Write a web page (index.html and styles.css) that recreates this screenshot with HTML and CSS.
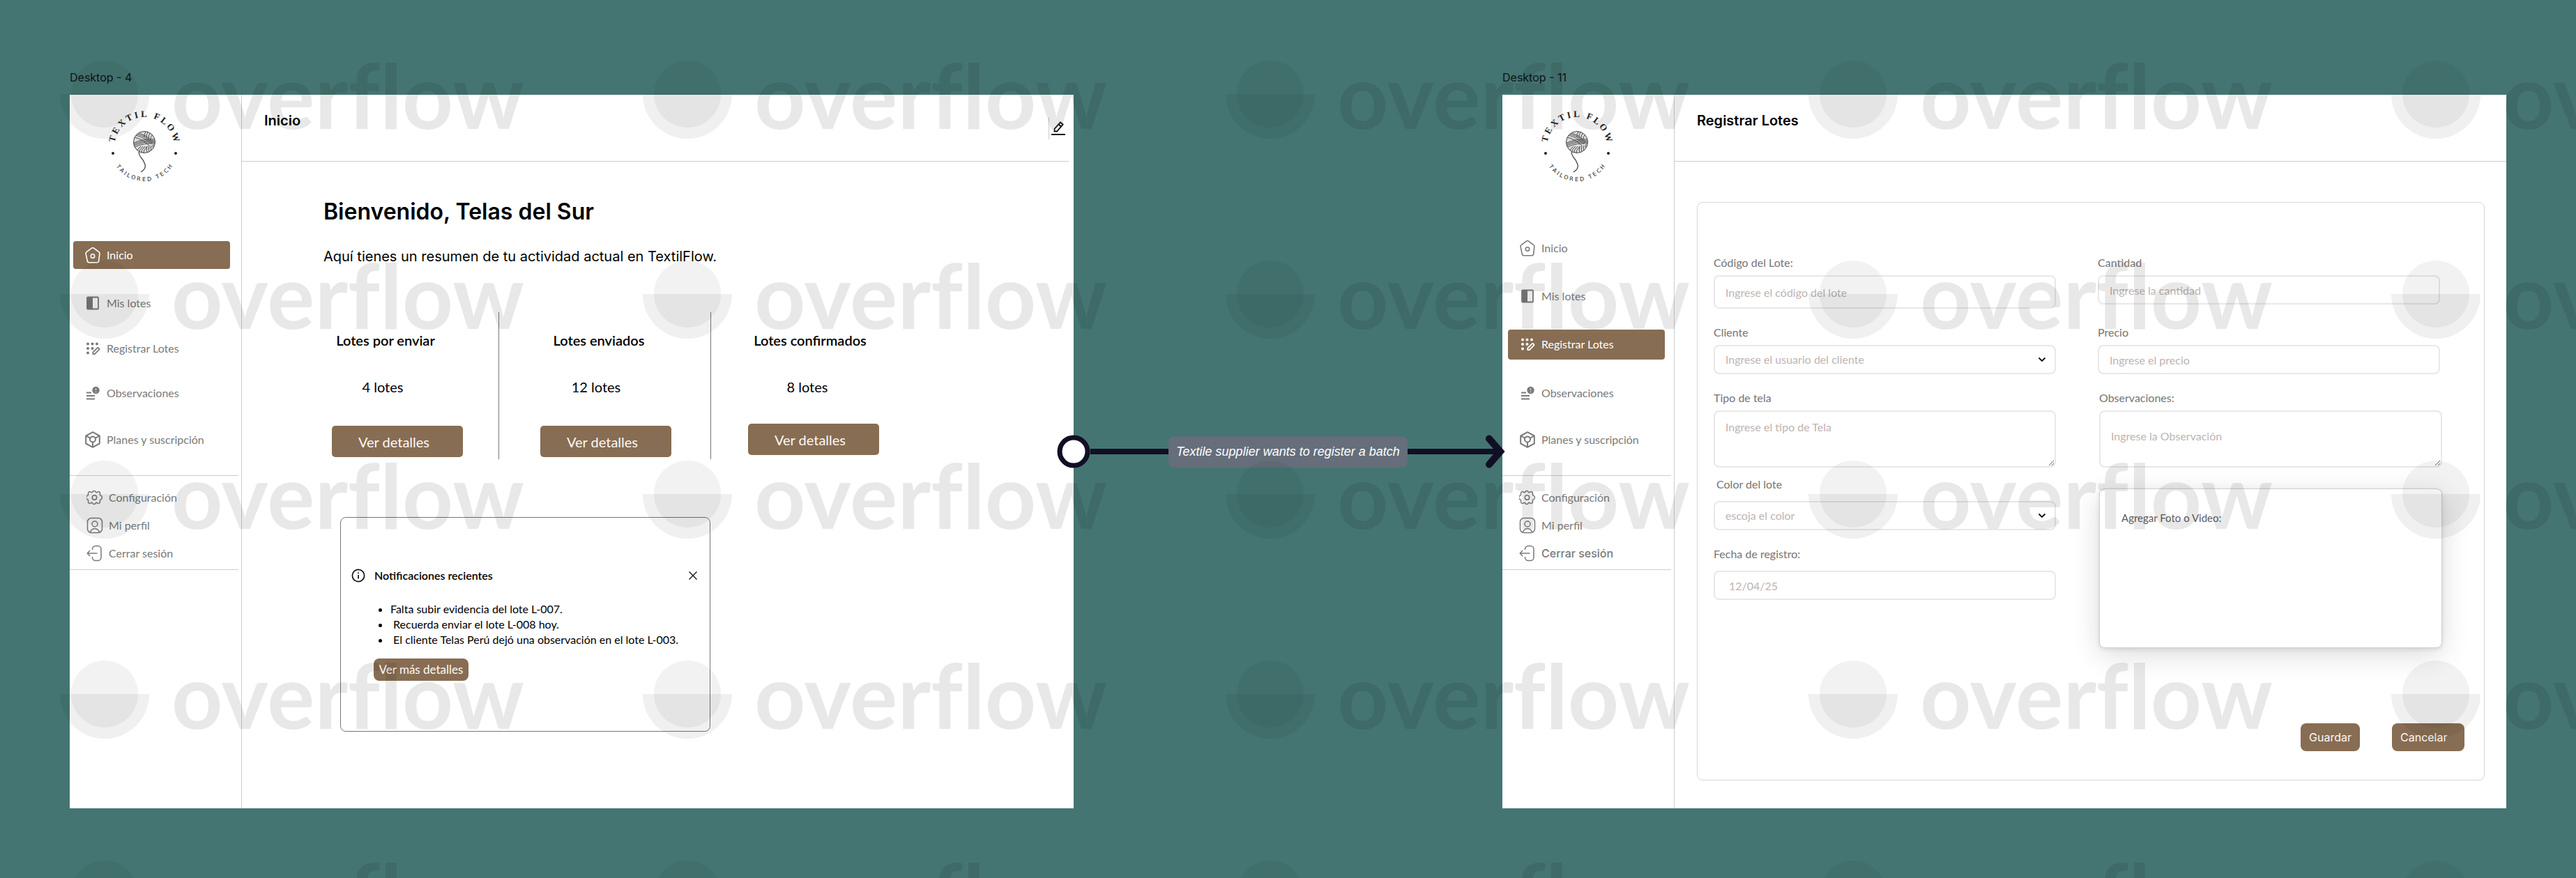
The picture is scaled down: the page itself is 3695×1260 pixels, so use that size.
FILE: index.html
```html
<!DOCTYPE html>
<html lang="es">
<head>
<meta charset="utf-8">
<meta name="viewport" content="width=device-width, initial-scale=1">
<title>TextilFlow</title>
<link rel="stylesheet" href="styles.css">
</head>
<body>
<svg class="sprite" aria-hidden="true">
  <symbol id="i-home" viewBox="0 0 24 24"><path d="M10.4 2.1a2.6 2.6 0 0 1 3.2 0l7.3 5.6a2.6 2.6 0 0 1 1 2.4l-1.2 10.3a2.6 2.6 0 0 1-2.6 2.3H6.9a2.6 2.6 0 0 1-2.6-2.3L2.100 10.100a2.600 2.600 0 0 1 1-2.400z" fill="none" stroke="currentColor" stroke-width="1.600"/><circle cx="12" cy="13.500" r="2.700" fill="none" stroke="currentColor" stroke-width="1.600"/></symbol>
  <symbol id="i-lots" viewBox="0 0 24 24"><rect x="4" y="3.500" width="16" height="17" rx="1" fill="none" stroke="currentColor" stroke-width="1.800"/><path d="M4 3.500h8v17H4z" fill="currentColor"/></symbol>
  <symbol id="i-register" viewBox="0 0 24 24"><g fill="currentColor"><circle cx="5" cy="5.500" r="2"/><circle cx="11.500" cy="5.500" r="2"/><circle cx="18" cy="5.500" r="2"/><circle cx="5" cy="12" r="2"/><circle cx="11.500" cy="12" r="2"/><circle cx="5" cy="18.500" r="2"/></g><path d="M12.300 20.200v-2.600l6.200-6.200a1.300 1.300 0 0 1 1.900 0l.6.600a1.300 1.300 0 0 1 0 1.900l-6.200 6.300z" fill="none" stroke="currentColor" stroke-width="1.800"/></symbol>
  <symbol id="i-notes" viewBox="0 0 24 24"><g stroke="currentColor" stroke-width="1.800"><path d="M3 11.500h7M3 16h12M3 20.500h12"/></g><circle cx="16.500" cy="8" r="5.200" fill="currentColor"/><path d="M16.500 5v3.500M16.500 9.800v1.400" stroke="#cfcfcf" stroke-width="1.400"/></symbol>
  <symbol id="i-plan" viewBox="0 0 24 24"><g fill="none" stroke="currentColor" stroke-width="2" stroke-linejoin="round"><path d="M12 1.200 21.800 6.500v11L12 22.800 2.200 17.500v-11z"/><circle cx="12" cy="11.500" r="4"/><path d="M3 6.800l5.500 2.900M21 6.800l-5.500 2.900M12 15.500v7"/></g></symbol>
  <symbol id="i-gear" viewBox="0 0 24 24"><path d="M22.4 12l-.1 1-.5.9-.9.700-.9.500-.5.600-.1.800.1 1.100-.1 1.100-.5.900-.8.600-1 .2-1-.3-1-.6-.7-.3-.7.300-.7.900-.8.800-1.200.4-1.200-.4-.8-.8-.7-.9-.7-.3-.7.300-1 .6-1 .3-1-.2-.8-.6-.5-.9-.1-1.100.1-1.100-.1-.8-.5-.6-.9-.5-.9-.7-.5-.9-.1-1 .1-1 .5-.9.9-.7.9-.5.5-.6.100-.8-.1-1.100.1-1.100.5-.9.8-.6 1-.2 1 .3 1 .6.700.3.700-.3.700-.9.800-.8 1.200-.4 1.200.4.8.8.7.9.7.3.7-.3 1-.6 1-.3 1 .2.8.6.5.9.1 1.100-.1 1.100.1.800.5.600.9.500.9.700.5.900z" fill="none" stroke="currentColor" stroke-width="1.500" stroke-linejoin="round"/><circle cx="11.500" cy="12" r="3.200" fill="none" stroke="currentColor" stroke-width="1.500"/></symbol>
  <symbol id="i-user" viewBox="0 0 24 24"><g fill="none" stroke="currentColor" stroke-width="1.500"><rect x="1.500" y="1.500" width="21" height="21" rx="5.500"/><circle cx="12" cy="10" r="4"/><path d="M5.500 21.800a6.700 6.700 0 0 1 13 0"/></g></symbol>
  <symbol id="i-exit" viewBox="0 0 24 24"><g fill="none" stroke="currentColor" stroke-width="1.500" stroke-linecap="round" stroke-linejoin="round"><path d="M8.500 6.500V6a4.500 4.500 0 0 1 4.500-4.500h3.500A4.500 4.500 0 0 1 21 6v12a4.500 4.500 0 0 1-4.500 4.500H13A4.500 4.500 0 0 1 8.500 18v-.5M15 12H1.500M4.800 8.300 1.200 12l3.600 3.700"/></g></symbol>
  <defs>
    <path id="arc-top" d="M12 55a43 43 0 0 1 86 0"/>
    <path id="arc-bottom" d="M6 55a49 49 0 0 0 98 0"/>
    <clipPath id="ball"><circle cx="55" cy="48" r="15.500"/></clipPath>
  </defs>
  <symbol id="yarn" viewBox="0 0 110 110">
    <circle cx="10" cy="64" r="2" fill="#222"/><circle cx="100" cy="64" r="2" fill="#222"/>
    <circle cx="55" cy="48" r="15.500" fill="#dcdcdc" stroke="#444"/>
    <g clip-path="url(#ball)" fill="none" stroke="#3a3a3a" stroke-width=".9">
      <path d="M38 50q16-8 34-6M38 52q16-8 34-6M38 54q16-8 34-6M39 56q16-8 34-6"/>
      <path d="M40 41q12 2 22 12M42 38q12 2 23 13M44 36q12 3 22 13M46 34q12 4 22 14"/>
      <path d="M58 31q-4 6-3 10M61 32q-4 6-3 10M64 34q-4 5-3 9M67 37q-4 4-3 7"/>
      <path d="M44 64q0-6 6-10M47 65q0-6 6-11M50 66q0-7 6-12M53 66q1-7 6-12"/>
      <path d="M60 65q-3-5-1-11M63 64q-3-5-1-11M66 62q-3-5-1-9M69 58q-3-4-1-7"/>
    </g>
    <path d="M47 62q1 6 4 9t5 9-6 11" fill="none" stroke="#444" stroke-width="1.300"/>
  </symbol>
</svg>

<div class="board">
  <h2 class="frame-label label-left">Desktop - 4</h2>
  <h2 class="frame-label label-right">Desktop - 11</h2>

  <section class="frame frame-home">
    <aside class="sidebar">
      <svg class="logo" viewBox="0 0 110 110" role="img" aria-label="Textil Flow, Tailored Tech">
        <use href="#yarn"/>
        <text class="brand-name"><textPath href="#arc-top" startOffset="50%" text-anchor="middle">T E X T I L &#160; F L O W</textPath></text>
        <text class="brand-tag"><textPath href="#arc-bottom" startOffset="50%" text-anchor="middle">T A I L O R E D &#160; T E C H</textPath></text>
      </svg>
      <nav class="nav-main" aria-label="Principal">
        <a class="nav-link active" href="#inicio"><svg><use href="#i-home"/></svg>Inicio</a>
        <a class="nav-link" href="#lotes"><svg><use href="#i-lots"/></svg>Mis lotes</a>
        <a class="nav-link" href="#registrar"><svg><use href="#i-register"/></svg>Registrar Lotes</a>
        <a class="nav-link" href="#observaciones"><svg><use href="#i-notes"/></svg>Observaciones</a>
        <a class="nav-link" href="#planes"><svg><use href="#i-plan"/></svg>Planes y suscripción</a>
      </nav>
      <nav class="nav-account" aria-label="Cuenta">
        <a class="nav-link" href="#configuracion"><svg><use href="#i-gear"/></svg>Configuración</a>
        <a class="nav-link" href="#perfil"><svg><use href="#i-user"/></svg>Mi perfil</a>
        <a class="nav-link" href="#salir"><svg><use href="#i-exit"/></svg>Cerrar sesión</a>
      </nav>
    </aside>
    <div class="main">
      <header class="topbar">
        <h1>Inicio</h1>
        <button class="edit" type="button" aria-label="Editar">
          <svg viewBox="0 0 20 20" fill="none" stroke="#111" stroke-width="1.800"><path d="M4.500 14.500V11L13 1.500l3.700 3.200-8.600 9.800zM10.500 4.500l3.500 3M0 19h20"/></svg>
        </button>
      </header>
      <div class="welcome">
        <h2>Bienvenido, Telas del Sur</h2>
        <p class="lead">Aquí tienes un resumen de tu actividad actual en TextilFlow.</p>
        <div class="stats">
          <article class="stat stat-pending"><h3>Lotes por enviar</h3><p>4 lotes</p><button class="btn btn-lg" type="button">Ver detalles</button></article>
          <article class="stat stat-sent"><h3>Lotes enviados</h3><p>12 lotes</p><button class="btn btn-lg" type="button">Ver detalles</button></article>
          <article class="stat stat-confirmed"><h3>Lotes confirmados</h3><p>8 lotes</p><button class="btn btn-lg" type="button">Ver detalles</button></article>
        </div>
        <section class="notice">
          <header>
            <svg class="info" viewBox="0 0 20 20" fill="none" stroke="#111" stroke-width="1.700"><circle cx="10" cy="10" r="8.600"/><path d="M10 9v5.500M10 5.500v1.800"/></svg>
            <h3>Notificaciones recientes</h3>
            <button class="close" type="button" aria-label="Cerrar"><svg viewBox="0 0 12 12" stroke="#222" stroke-width="1.500"><path d="M.5.5l11 11M11.500.5l-11 11"/></svg></button>
          </header>
          <ul>
            <li>Falta subir evidencia del lote L-007.</li>
            <li>&nbsp;Recuerda enviar el lote L-008 hoy.</li>
            <li>&nbsp;El cliente Telas Perú dejó una observación en el lote L-003.</li>
          </ul>
          <button class="btn btn-sm" type="button">Ver más detalles</button>
        </section>
      </div>
    </div>
  </section>

  <div class="connector">
    <svg class="knob" viewBox="0 0 48 48"><circle cx="24" cy="24" r="20" fill="#fff" stroke="#110f24" stroke-width="7"/></svg>
    <span class="wire"></span>
    <span class="connector-label">Textile supplier wants to register a batch</span>
    <span class="wire"></span>
    <svg class="arrow" viewBox="0 0 29 60"><path d="M0 26h19v8H0z" fill="#110f24"/><path d="M5 11.500 21 30 5 48.500" fill="none" stroke="#110f24" stroke-width="10" stroke-linecap="round" stroke-linejoin="miter"/></svg>
  </div>

  <section class="frame frame-register">
    <aside class="sidebar">
      <svg class="logo" viewBox="0 0 110 110" role="img" aria-label="Textil Flow, Tailored Tech">
        <use href="#yarn"/>
        <text class="brand-name"><textPath href="#arc-top" startOffset="50%" text-anchor="middle">T E X T I L &#160; F L O W</textPath></text>
        <text class="brand-tag"><textPath href="#arc-bottom" startOffset="50%" text-anchor="middle">T A I L O R E D &#160; T E C H</textPath></text>
      </svg>
      <nav class="nav-main" aria-label="Principal">
        <a class="nav-link" href="#inicio"><svg><use href="#i-home"/></svg>Inicio</a>
        <a class="nav-link" href="#lotes"><svg><use href="#i-lots"/></svg>Mis lotes</a>
        <a class="nav-link active" href="#registrar"><svg><use href="#i-register"/></svg>Registrar Lotes</a>
        <a class="nav-link" href="#observaciones"><svg><use href="#i-notes"/></svg>Observaciones</a>
        <a class="nav-link" href="#planes"><svg><use href="#i-plan"/></svg>Planes y suscripción</a>
      </nav>
      <nav class="nav-account" aria-label="Cuenta">
        <a class="nav-link" href="#configuracion"><svg><use href="#i-gear"/></svg>Configuración</a>
        <a class="nav-link" href="#perfil"><svg><use href="#i-user"/></svg>Mi perfil</a>
        <a class="nav-link nav-exit" href="#salir"><svg><use href="#i-exit"/></svg>Cerrar sesión</a>
      </nav>
    </aside>
    <div class="main">
      <header class="topbar"><h1>Registrar Lotes</h1></header>
      <form class="panel">
        <div class="fields">
          <div class="column">
            <div class="field"><label for="codigo">Código del Lote:</label><input class="tall" id="codigo" type="text" placeholder="Ingrese el código del lote"></div>
            <div class="field"><label for="cliente">Cliente</label>
              <div class="select"><select id="cliente"><option>Ingrese el usuario del cliente</option></select><svg viewBox="0 0 12 8"><path d="M1.500 1.500 6 6l4.500-4.500" fill="none" stroke="#111" stroke-width="1.800"/></svg></div></div>
            <div class="field"><label for="tipo">Tipo de tela</label><textarea id="tipo" placeholder="Ingrese el tipo de Tela"></textarea></div>
            <div class="field field-color"><label for="color">Color del lote</label>
              <div class="select"><select id="color"><option>escoja el color</option></select><svg viewBox="0 0 12 8"><path d="M1.500 1.500 6 6l4.500-4.500" fill="none" stroke="#111" stroke-width="1.800"/></svg></div></div>
            <div class="field field-date"><label for="fecha">Fecha de registro:</label><input id="fecha" type="text" value="12/04/25"></div>
          </div>
          <div class="column">
            <div class="field field-amount"><label for="cantidad">Cantidad</label><input id="cantidad" type="text" placeholder="Ingrese la cantidad"></div>
            <div class="field"><label for="precio">Precio</label><input id="precio" type="text" placeholder="Ingrese el precio"></div>
            <div class="extras">
              <div class="field field-notes"><label for="obs">Observaciones:</label><textarea id="obs" placeholder="Ingrese la Observación"></textarea></div>
              <div class="upload"><p>Agregar Foto o Video:</p></div>
            </div>
          </div>
        </div>
        <div class="actions"><button class="btn" type="button">Guardar</button><button class="btn btn-cancel" type="button">Cancelar</button></div>
      </form>
    </div>
  </section>

  <svg class="watermark" aria-hidden="true">
    <defs>
      <pattern id="mark" x="86" y="86" width="836" height="287" patternUnits="userSpaceOnUse">
        <circle cx="64" cy="49" r="48" fill="#000" fill-opacity=".05"/>
        <path d="M0 49h128a64 64 0 0 1-128 0z" fill="#000" fill-opacity=".06"/>
        <text class="mark-text" x="160" y="99">overflow</text>
      </pattern>
    </defs>
    <rect width="100%" height="100%" fill="url(#mark)"/>
  </svg>
</div>
</body>
</html>
```
FILE: styles.css
```css
* { box-sizing: border-box; }

body {
  margin: 0;
  background: #447572;
  font-family: Lato, sans-serif;
  font-size: 16px;
  line-height: 20px;
  color: #000;
}

h1, h2, h3, p, ul { margin: 0; }

button, input, select, textarea { font: inherit; }

.sprite { position: absolute; width: 0; height: 0; }

/* Canvas with the two screens and the link between them */
.board {
  position: relative;
  display: grid;
  grid-template-columns: minmax(0, 1440fr) minmax(0, 615fr) minmax(0, 1440fr);
  grid-template-rows: 20px auto;
  row-gap: 15px;
  min-height: 100vh;
  padding: 101px 100px 100px;
}

.frame-label {
  font: 400 16px/20px Inter, sans-serif;
  color: #0c1414;
}
.label-left { grid-area: 1 / 1; }
.label-right { grid-area: 1 / 3; }

.frame {
  display: flex;
  background: #fff;
}
.frame-home { grid-area: 2 / 1; }
.frame-register { grid-area: 2 / 3; }

/* Sidebar */
.sidebar {
  flex: 0 0 247px;
  border-right: 1px solid #ccc;
}

.logo {
  display: block;
  width: 110px;
  height: 110px;
  margin: 20px 0 0 52px;
}
.brand-name { font: 700 13px "Liberation Serif", serif; fill: #222; }
.brand-tag { font: 400 8px "DejaVu Sans", sans-serif; fill: #222; }

.nav-main {
  display: grid;
  align-items: center;
}
.frame-home .nav-main {
  grid-template-rows: 68px 70px 60px 68px 66px;
  margin: 66px 0 18px 5px;
}
.frame-register .nav-main {
  grid-template-rows: 68px 70px 68px 72px 61px;
  margin: 56px 0 21px 8px;
}

.nav-link {
  display: flex;
  align-items: center;
  gap: 8px;
  width: 225px;
  height: 40px;
  padding-left: 16px;
  border-radius: 4px;
  color: #7a7a7a;
  text-decoration: none;
}
.nav-link svg { width: 24px; height: 24px; }
.nav-link.active { background: #876d53; color: #fff; }
.frame-register .active { height: 43px; }
.nav-exit { font-family: Inter, sans-serif; font-weight: 500; }

.nav-account {
  margin-right: 4px;
  padding: 11px 0 3px 8px;
  border: solid #ccc;
  border-width: 1px 0;
}

/* Header */
.main { flex: 1; min-width: 0; }

.topbar {
  display: flex;
  justify-content: space-between;
  height: 96px;
  padding: 25px 0 0 32px;
  border-bottom: 1px solid #ccc;
}
.frame-home .topbar { margin-right: 7px; }
.topbar h1 { font: 600 20px/24px Inter, sans-serif; }

.edit {
  width: 29px;
  height: 32px;
  margin-top: 7px;
  padding: 0 0 0 3px;
  border: 0;
  border-left: 1px solid #ccc;
  background: none;
}
.edit svg { display: block; width: 20px; height: 20px; }

/* Home */
.welcome { padding: 52px 24px 0 117px; }
.welcome h2 { font: 600 32px/40px Inter, sans-serif; }
.lead { margin-top: 32px; font: 400 20px/24px Inter, sans-serif; }

.stats {
  display: grid;
  grid-template-columns: 252px 304px 1fr;
  margin-top: 68px;
  font-size: 20px;
  line-height: 24px;
}
.stat {
  height: 211px;
  padding-top: 28px;
  border-right: 1px solid #777;
}
.stat h3, .stat p { width: 188px; text-align: center; }
.stat h3 { font-size: 20px; font-weight: 600; }
.stat p { margin: 43px 0 44px -4px; }
.stat-pending { padding-left: 12px; }
.stat-pending h3, .stat-pending p { padding-right: 34px; }
.stat-sent { padding-left: 59px; }
.stat-sent h3, .stat-sent p { padding-right: 20px; }
.stat-confirmed { padding-left: 53px; border: 0; }
.stat-confirmed h3, .stat-confirmed p { padding-right: 10px; }
.stat-confirmed p { margin-bottom: 41px; }

.btn {
  height: 40px;
  padding: 0 12px;
  border: 0;
  border-radius: 8px;
  background: #876d53;
  color: #fdf8f3;
  font-family: Inter, sans-serif;
}
.btn-lg {
  width: 188px;
  height: 45px;
  padding: 0 10px 0 0;
  border-radius: 5px;
  font-family: Lato, sans-serif;
}
.btn-sm {
  width: 136px;
  height: 32px;
  padding: 0;
  margin-left: 47px;
  font-family: Lato, sans-serif;
  font-size: 17px;
}

.notice {
  width: 531px;
  height: 308px;
  margin: 83px 0 0 24px;
  padding-top: 73px;
  border: 1px solid #777;
  border-radius: 8px;
}
.notice header {
  display: flex;
  align-items: center;
  padding: 0 18px 0 15px;
}
.notice h3 { flex: 1; margin-left: 13px; font-size: 16px; font-weight: 600; }
.info { width: 20px; height: 20px; }
.close { padding: 0; border: 0; background: none; }
.close svg { display: block; width: 12px; height: 12px; }
.notice ul {
  margin: 27px 0 16px;
  padding-left: 71px;
  line-height: 22px;
}

/* Link between the screens */
.connector {
  grid-area: 2 / 2;
  align-self: center;
  display: flex;
  align-items: center;
  z-index: 1;
  margin: 0 -5px 0 -24px;
}
.knob { width: 48px; height: 48px; }
.wire { flex: 1; height: 8px; background: #110f24; }
.connector-label {
  width: 343px;
  height: 45px;
  border-radius: 8px;
  background: #656e7a;
  color: #fff;
  font: italic 400 18px/45px "Liberation Sans", sans-serif;
  text-align: center;
  white-space: nowrap;
}
.arrow { width: 29px; height: 60px; }

/* Batch form */
.panel {
  margin: 58px 31px 40px 32px;
  padding: 76px 28px 41px 23px;
  border: 1px solid #d6d6d6;
  border-radius: 8px;
}
.fields {
  display: grid;
  grid-template-columns: 1fr 1fr;
  column-gap: 60px;
  margin-right: 35px;
}
.field { margin-bottom: 24px; }
.field label { display: block; margin-bottom: 8px; color: #757575; }
.field input, .field select, .field textarea {
  display: block;
  width: 100%;
  height: 42px;
  padding: 0 15px;
  border: 2px solid #e8e8e8;
  border-radius: 8px;
  background: #fff;
  color: #beb4b2;
}
.field input.tall { height: 48px; }
.field textarea { height: 82px; padding-top: 12px; resize: vertical; }
.field ::placeholder { color: #beb4b2; opacity: 1; }

.select { display: grid; align-items: center; }
.select select { grid-area: 1 / 1; appearance: none; }
.select svg {
  grid-area: 1 / 1;
  justify-self: end;
  width: 12px;
  height: 8px;
  margin-right: 14px;
}

.field:has(textarea) { margin-bottom: 14px; }
.field-color label { margin: 0 0 14px 4px; }
.field-date label { margin-bottom: 14px; }
.field-date input { padding-left: 20px; }
.field-amount, .field.field-notes { margin-bottom: 30px; }
.field-notes textarea { padding-top: 25px; }
.extras { margin: 0 -3px 0 2px; }

.upload {
  height: 229px;
  padding: 31px;
  border: 1px solid #d0d0d0;
  border-radius: 8px;
  background: #fff;
  box-shadow: 0 10px 40px rgba(0, 0, 0, .14), 0 2px 6px rgba(0, 0, 0, .1);
  color: #5c5c5c;
  font-size: 15px;
}

.actions {
  display: flex;
  justify-content: flex-end;
  gap: 46px;
  margin-top: 108px;
}
.btn-cancel { width: 104px; text-align: left; }

/* Repeating mark over the whole canvas */
.watermark {
  position: absolute;
  inset: 0;
  z-index: 2;
  width: 100%;
  height: 100%;
  pointer-events: none;
}
.mark-text {
  font: 700 128px Lato, sans-serif;
  font-variant-ligatures: none;
  fill: #000;
  fill-opacity: .09;
}
```
